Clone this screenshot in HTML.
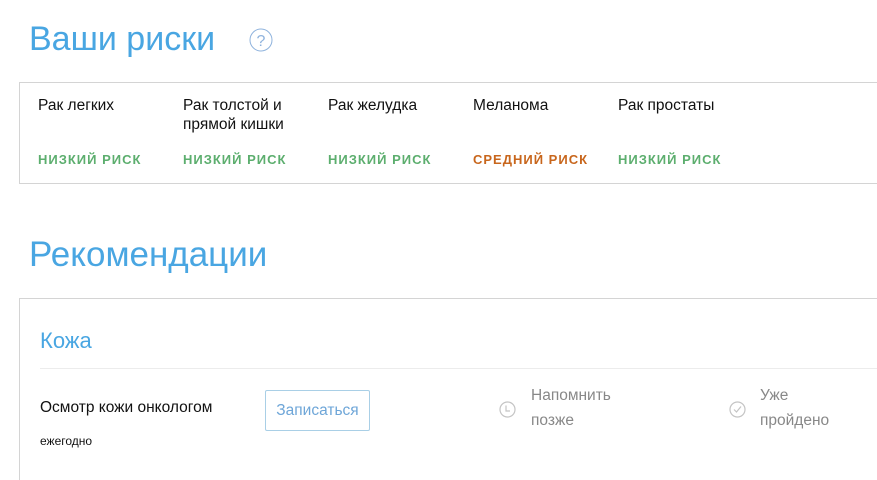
<!DOCTYPE html>
<html><head><meta charset="utf-8"><style>
html,body{margin:0;width:877px;height:480px;overflow:hidden}
body{background:#fff;font-family:"Liberation Sans",sans-serif;position:relative}
.a{position:absolute;white-space:nowrap}
h1{position:absolute;margin:0;font-weight:normal;color:#49a6e2;font-size:34px;white-space:nowrap}
.box{position:absolute;border:1px solid #d4d4d4;border-right:none}
.n{font-size:15.5px;color:#111;line-height:19px}
.r{font-size:13px;font-weight:bold;color:#5cae6e;letter-spacing:1px}
.o{color:#c8661c}
.g{color:#888;font-size:15.5px;line-height:25px}
</style></head><body>
<h1 style="left:29px;top:20px">Ваши риски</h1>
<svg class="a" style="left:249px;top:28px" width="24" height="24" viewBox="0 0 24 24"><circle cx="12" cy="12" r="11" fill="none" stroke="#8fb3dd" stroke-width="1"/><text x="12" y="18" text-anchor="middle" font-family="Liberation Sans" font-size="16" fill="#8fb3dd">?</text></svg>
<div class="box" style="left:19px;top:82px;width:857px;height:100px"></div>
<div class="a n" style="left:38px;top:96px">Рак легких</div>
<div class="a n" style="left:183px;top:96px">Рак толстой и<br>прямой кишки</div>
<div class="a n" style="left:328px;top:96px">Рак желудка</div>
<div class="a n" style="left:473px;top:96px">Меланома</div>
<div class="a n" style="left:618px;top:96px">Рак простаты</div>
<div class="a r" style="left:38px;top:152px">НИЗКИЙ РИСК</div>
<div class="a r" style="left:183px;top:152px">НИЗКИЙ РИСК</div>
<div class="a r" style="left:328px;top:152px">НИЗКИЙ РИСК</div>
<div class="a r o" style="left:473px;top:152px">СРЕДНИЙ РИСК</div>
<div class="a r" style="left:618px;top:152px">НИЗКИЙ РИСК</div>
<h1 style="left:29px;top:235px;font-size:35px">Рекомендации</h1>
<div class="box" style="left:19px;top:298px;width:857px;height:181px;border-bottom:none"></div>
<div class="a" style="left:40px;top:328px;font-size:22px;color:#49a6e2">Кожа</div>
<div class="a" style="left:40px;top:368px;width:837px;height:1px;background:#ececec"></div>
<div class="a" style="left:40px;top:399px;font-size:15.5px;color:#111">Осмотр кожи онкологом</div>
<div class="a" style="left:40px;top:434px;font-size:12px;color:#111">ежегодно</div>
<div class="a" style="left:265px;top:390px;width:103px;height:39px;border:1px solid #a9cfe6;border-radius:2px;color:#6ea6d8;font-size:15.5px;line-height:39px;text-align:center">Записаться</div>
<svg class="a" style="left:499px;top:401px" width="17" height="17" viewBox="0 0 17 17"><circle cx="8.5" cy="8.5" r="7.5" fill="none" stroke="#c4c4c4" stroke-width="1.2"/><path d="M7 4.5V10H11" fill="none" stroke="#c4c4c4" stroke-width="1.2"/></svg>
<div class="a g" style="left:531px;top:383px">Напомнить<br>позже</div>
<svg class="a" style="left:729px;top:401px" width="17" height="17" viewBox="0 0 17 17"><circle cx="8.5" cy="8.5" r="7.5" fill="none" stroke="#c4c4c4" stroke-width="1.2"/><path d="M5 8.5L7.5 11L12 5.5" fill="none" stroke="#c4c4c4" stroke-width="1.2"/></svg>
<div class="a g" style="left:760px;top:383px">Уже<br>пройдено</div>
</body></html>
